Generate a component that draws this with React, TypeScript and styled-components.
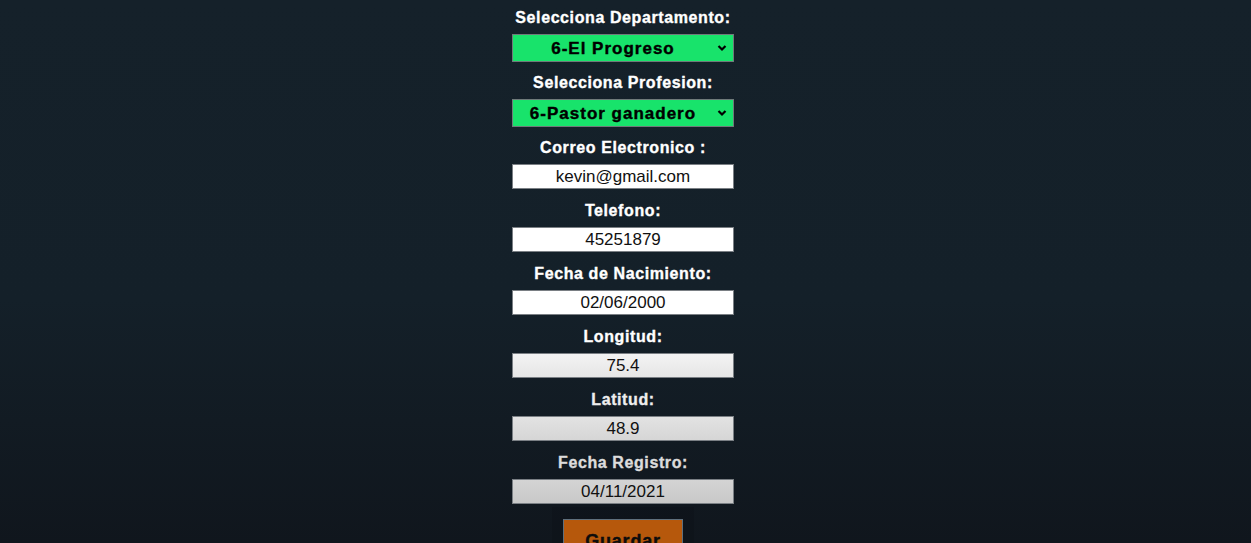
import React from "react";
import styled, { createGlobalStyle } from "styled-components";

const Global = createGlobalStyle`
  html, body { margin: 0; padding: 0; }
  body {
    min-height: 543px;
    background: linear-gradient(to bottom, #15212a 0%, #142029 55%, #10161d 100%);
    font-family: "Liberation Sans", Arial, sans-serif;
    overflow: hidden;
  }
`;

const Page = styled.div`
  display: flex;
  justify-content: center;
  padding: 7px 5px 0 0;
  height: 536px;
  overflow: hidden;
`;

const Form = styled.form`
  width: 222px;
  display: flex;
  flex-direction: column;
  align-items: center;
`;

const Field = styled.div<{ $gapAfter: number }>`
  width: 100%;
  display: flex;
  flex-direction: column;
  align-items: center;
  gap: 7px;
  margin-bottom: ${(p) => p.$gapAfter}px;
`;

const Label = styled.label<{ $tone?: string }>`
  padding-top: 2px;
  font-weight: 700;
  font-size: 16px;
  letter-spacing: 0.6px;
  line-height: 18px;
  color: ${(p) => p.$tone || "#ffffff"};
  -webkit-text-stroke: 0.35px ${(p) => p.$tone || "#ffffff"};
  white-space: nowrap;
`;

const SelectWrap = styled.div`
  position: relative;
  width: 100%;
  height: 28px;
`;

const Select = styled.select`
  appearance: none;
  -webkit-appearance: none;
  width: 100%;
  height: 28px;
  box-sizing: border-box;
  background: #18e36b;
  border: 1px solid #6f7a7a;
  border-radius: 0;
  font-family: "Liberation Sans", Arial, sans-serif;
  font-weight: 700;
  font-size: 17px;
  letter-spacing: 1px;
  -webkit-text-stroke: 0.4px #000;
  color: #000;
  text-align: center;
  text-align-last: center;
  padding: 1px 20px 0 0;
  outline: none;
`;

const Chevron = styled.svg`
  position: absolute;
  right: 7px;
  top: 10px;
  width: 10px;
  height: 8px;
  pointer-events: none;
`;

const Input = styled.input<{ $bg: string }>`
  width: 100%;
  height: 25px;
  box-sizing: border-box;
  background: ${(p) => p.$bg};
  border: 1px solid #7a7f84;
  border-radius: 0;
  font-family: "Liberation Sans", Arial, sans-serif;
  font-size: 17px;
  color: #111;
  text-align: center;
  padding: 0;
  outline: none;
  &:disabled { color: #111; opacity: 1; }
`;

const ButtonBar = styled.div`
  margin-top: 3px;
  width: 142px;
  padding-top: 12px;
  display: flex;
  justify-content: center;
  background: rgba(8, 12, 16, 0.22);
`;

const SaveButton = styled.button`
  width: 120px;
  height: 40px;
  background: #b6580c;
  border: 1px solid #5f6f7c;
  font-family: "Liberation Sans", Arial, sans-serif;
  font-weight: 700;
  font-size: 18px;
  letter-spacing: 0.8px;
  -webkit-text-stroke: 0.4px #0c0c0c;
  color: #0c0c0c;
  padding: 11px 0 0;
  display: flex;
  justify-content: center;
  align-items: flex-start;
`;

const ChevronIcon = () => (
  <Chevron viewBox="0 0 10 8">
    <path d="M1.5 2 L5 5.5 L8.5 2" fill="none" stroke="#000" strokeWidth="2.2" />
  </Chevron>
);

type SelField = { kind: "select"; label: string; value: string };
type InField = { kind: "input"; label: string; value: string; bg: string; tone?: string; disabled?: boolean };

const fields: (SelField | InField)[] = [
  { kind: "select", label: "Selecciona Departamento:", value: "6-El Progreso" },
  { kind: "select", label: "Selecciona Profesion:", value: "6-Pastor ganadero" },
  { kind: "input", label: "Correo Electronico :", value: "kevin@gmail.com", bg: "#ffffff" },
  { kind: "input", label: "Telefono:", value: "45251879", bg: "#ffffff" },
  { kind: "input", label: "Fecha de Nacimiento:", value: "02/06/2000", bg: "#ffffff" },
  { kind: "input", label: "Longitud:", value: "75.4", bg: "linear-gradient(#f3f3f3, #e6e6e6)", disabled: true },
  { kind: "input", label: "Latitud:", value: "48.9", bg: "linear-gradient(#e2e2e2, #d6d6d6)", tone: "#eeeeee", disabled: true },
  { kind: "input", label: "Fecha Registro:", value: "04/11/2021", bg: "linear-gradient(#d4d4d4, #c8c8c8)", tone: "#dcdcdc", disabled: true },
];

export default function App() {
  return (
    <>
      <Global />
      <Page>
        <Form onSubmit={(e) => e.preventDefault()}>
          {fields.map((f, i) => (
            <Field key={f.label} $gapAfter={i === fields.length - 1 ? 0 : f.kind === "select" ? 10 : 11}>
              <Label $tone={f.kind === "input" ? f.tone : undefined}>{f.label}</Label>
              {f.kind === "select" ? (
                <SelectWrap>
                  <Select defaultValue={f.value}>
                    <option value={f.value}>{f.value}</option>
                  </Select>
                  <ChevronIcon />
                </SelectWrap>
              ) : (
                <Input $bg={f.bg} defaultValue={f.value} disabled={f.disabled} readOnly={!f.disabled} />
              )}
            </Field>
          ))}
          <ButtonBar>
            <SaveButton type="submit">Guardar</SaveButton>
          </ButtonBar>
        </Form>
      </Page>
    </>
  );
}
